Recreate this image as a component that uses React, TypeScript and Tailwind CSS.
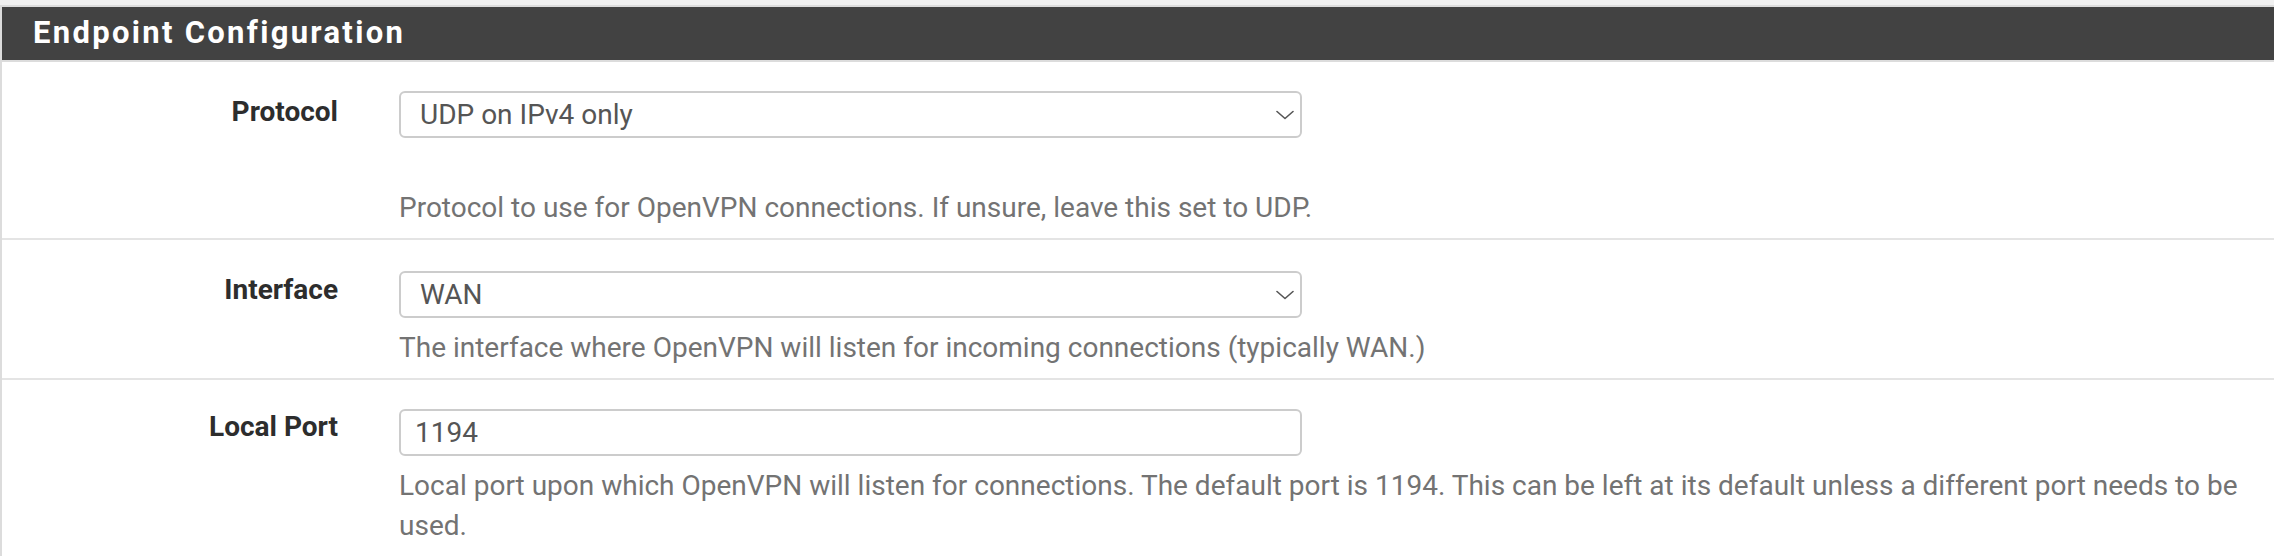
import { useState } from 'react'

function Chevron() {
  return (
    <svg
      className="pointer-events-none absolute right-[8px] top-1/2 -translate-y-1/2"
      width="18"
      height="10"
      viewBox="0 0 18 10"
      fill="none"
    >
      <polyline points="1,1.5 9,8.5 17,1.5" stroke="#555555" strokeWidth="1.6" strokeLinecap="round" strokeLinejoin="round" />
    </svg>
  )
}

interface RowProps {
  label: string
  children: React.ReactNode
  help: React.ReactNode
  controlTop: string
  labelTop?: string
}

function Row({ label, children, help, controlTop, labelTop = 'pt-[30px]' }: RowProps) {
  return (
    <div className="flex border-b-2 border-[#e4e4e4]">
      <div className={`w-[366px] shrink-0 pr-[30px] text-right text-[28px] leading-[40px] font-bold text-[#2d2d2d] ${labelTop}`}>
        {label}
      </div>
      <div className={`flex-1 pl-[31px] pr-[26px] pb-[10px] ${controlTop}`}>
        {children}
        <div className="mt-[10px] text-[28px] leading-[40px] text-[#737373]">{help}</div>
      </div>
    </div>
  )
}

export default function App() {
  const [protocol, setProtocol] = useState('UDP4')
  const [iface, setIface] = useState('wan')
  const [port, setPort] = useState('1194')

  const selectCls =
    'h-[47px] w-full appearance-none rounded-[6px] border-2 border-[#cccccc] bg-white pl-[19px] pr-10 text-[28px] text-[#555555] outline-none'

  return (
    <div className="min-h-screen bg-white" style={{ fontFamily: 'Roboto, "Noto Sans", sans-serif' }}>
      <div className="h-[5px] bg-[#f0f0f0]" />
      <div className="border-l-2 border-t-2 border-[#dcdcdc]">
        <div className="flex h-[55px] items-center border-b-2 border-[#dcdcdc] bg-[#424242] pl-[31px]">
          <h2 className="text-[31px] font-bold tracking-[2.3px] text-white">Endpoint Configuration</h2>
        </div>

        <Row
          label="Protocol"
          controlTop="pt-[29px]"
          help={
            <>
              <br />
              Protocol to use for OpenVPN connections. If unsure, leave this set to UDP.
            </>
          }
        >
          <div className="relative w-[903px]">
            <select value={protocol} onChange={(e) => setProtocol(e.target.value)} className={selectCls}>
              <option value="UDP4">UDP on IPv4 only</option>
              <option value="UDP6">UDP on IPv6 only</option>
              <option value="TCP4">TCP on IPv4 only</option>
              <option value="TCP6">TCP on IPv6 only</option>
            </select>
            <Chevron />
          </div>
        </Row>

        <Row
          label="Interface"
          controlTop="pt-[31px]"
          help="The interface where OpenVPN will listen for incoming connections (typically WAN.)"
        >
          <div className="relative w-[903px]">
            <select value={iface} onChange={(e) => setIface(e.target.value)} className={selectCls}>
              <option value="wan">WAN</option>
              <option value="lan">LAN</option>
              <option value="any">any</option>
            </select>
            <Chevron />
          </div>
        </Row>

        <Row
          label="Local Port"
          controlTop="pt-[29px]"
          labelTop="pt-[27px]"
          help="Local port upon which OpenVPN will listen for connections. The default port is 1194. This can be left at its default unless a different port needs to be used."
        >
          <input
            type="text"
            value={port}
            onChange={(e) => setPort(e.target.value)}
            className="h-[47px] w-[903px] rounded-[6px] border-2 border-[#cccccc] bg-white pl-[14px] text-[28px] text-[#555555] outline-none"
          />
        </Row>
      </div>
    </div>
  )
}
